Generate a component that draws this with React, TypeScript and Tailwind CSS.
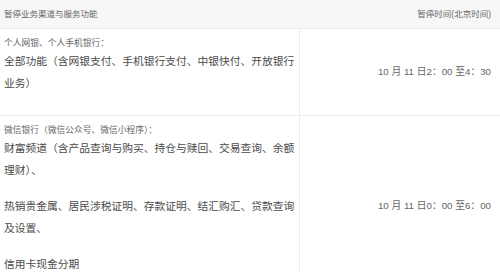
const font = { fontFamily: '"Liberation Sans", "Noto Sans CJK SC", sans-serif' };

type Row = {
  label: string;
  items: string[];
  time: string;
};

const rows: Row[] = [
  {
    label: "个人网银、个人手机银行：",
    items: ["全部功能（含网银支付、手机银行支付、中银快付、开放银行业务）"],
    time: "10 月 11 日2：00 至4：30",
  },
  {
    label: "微信银行（微信公众号、微信小程序）：",
    items: [
      "财富频道（含产品查询与购买、持仓与赎回、交易查询、余额理财）、",
      "热销贵金属、居民涉税证明、存款证明、结汇购汇、贷款查询及设置、",
      "信用卡现金分期",
    ],
    time: "10 月 11 日0：00 至6：00",
  },
];

export default function App() {
  return (
    <div className="w-[500px] h-[272px] overflow-hidden bg-white" style={font}>
      <div className="flex h-[29px] items-center justify-between border-b border-[#ececec] bg-[#f7f7f7] pl-[4px] pr-[9px] text-[8.5px] text-[#666]">
        <span>暂停业务渠道与服务功能</span>
        <span>暂停时间(北京时间)</span>
      </div>
      {rows.map((row) => (
        <div key={row.label} className="flex border-b border-[#ececec]">
          <div className="w-[300px] shrink-0 border-r border-[#ececec] pt-[7px] pb-[7px] pl-[4px] pr-[3px]">
            <div className="text-[8.75px] leading-[14px] text-[#666]">{row.label}</div>
            {row.items.map((item) => (
              <p key={item} className="mb-[14px] text-[10.75px] leading-[22px] text-[#4a4a4a]">
                {item}
              </p>
            ))}
          </div>
          <div className="flex flex-1 items-center justify-end pr-[9px] text-[9.75px] text-[#666]">
            {row.time}
          </div>
        </div>
      ))}
    </div>
  );
}
